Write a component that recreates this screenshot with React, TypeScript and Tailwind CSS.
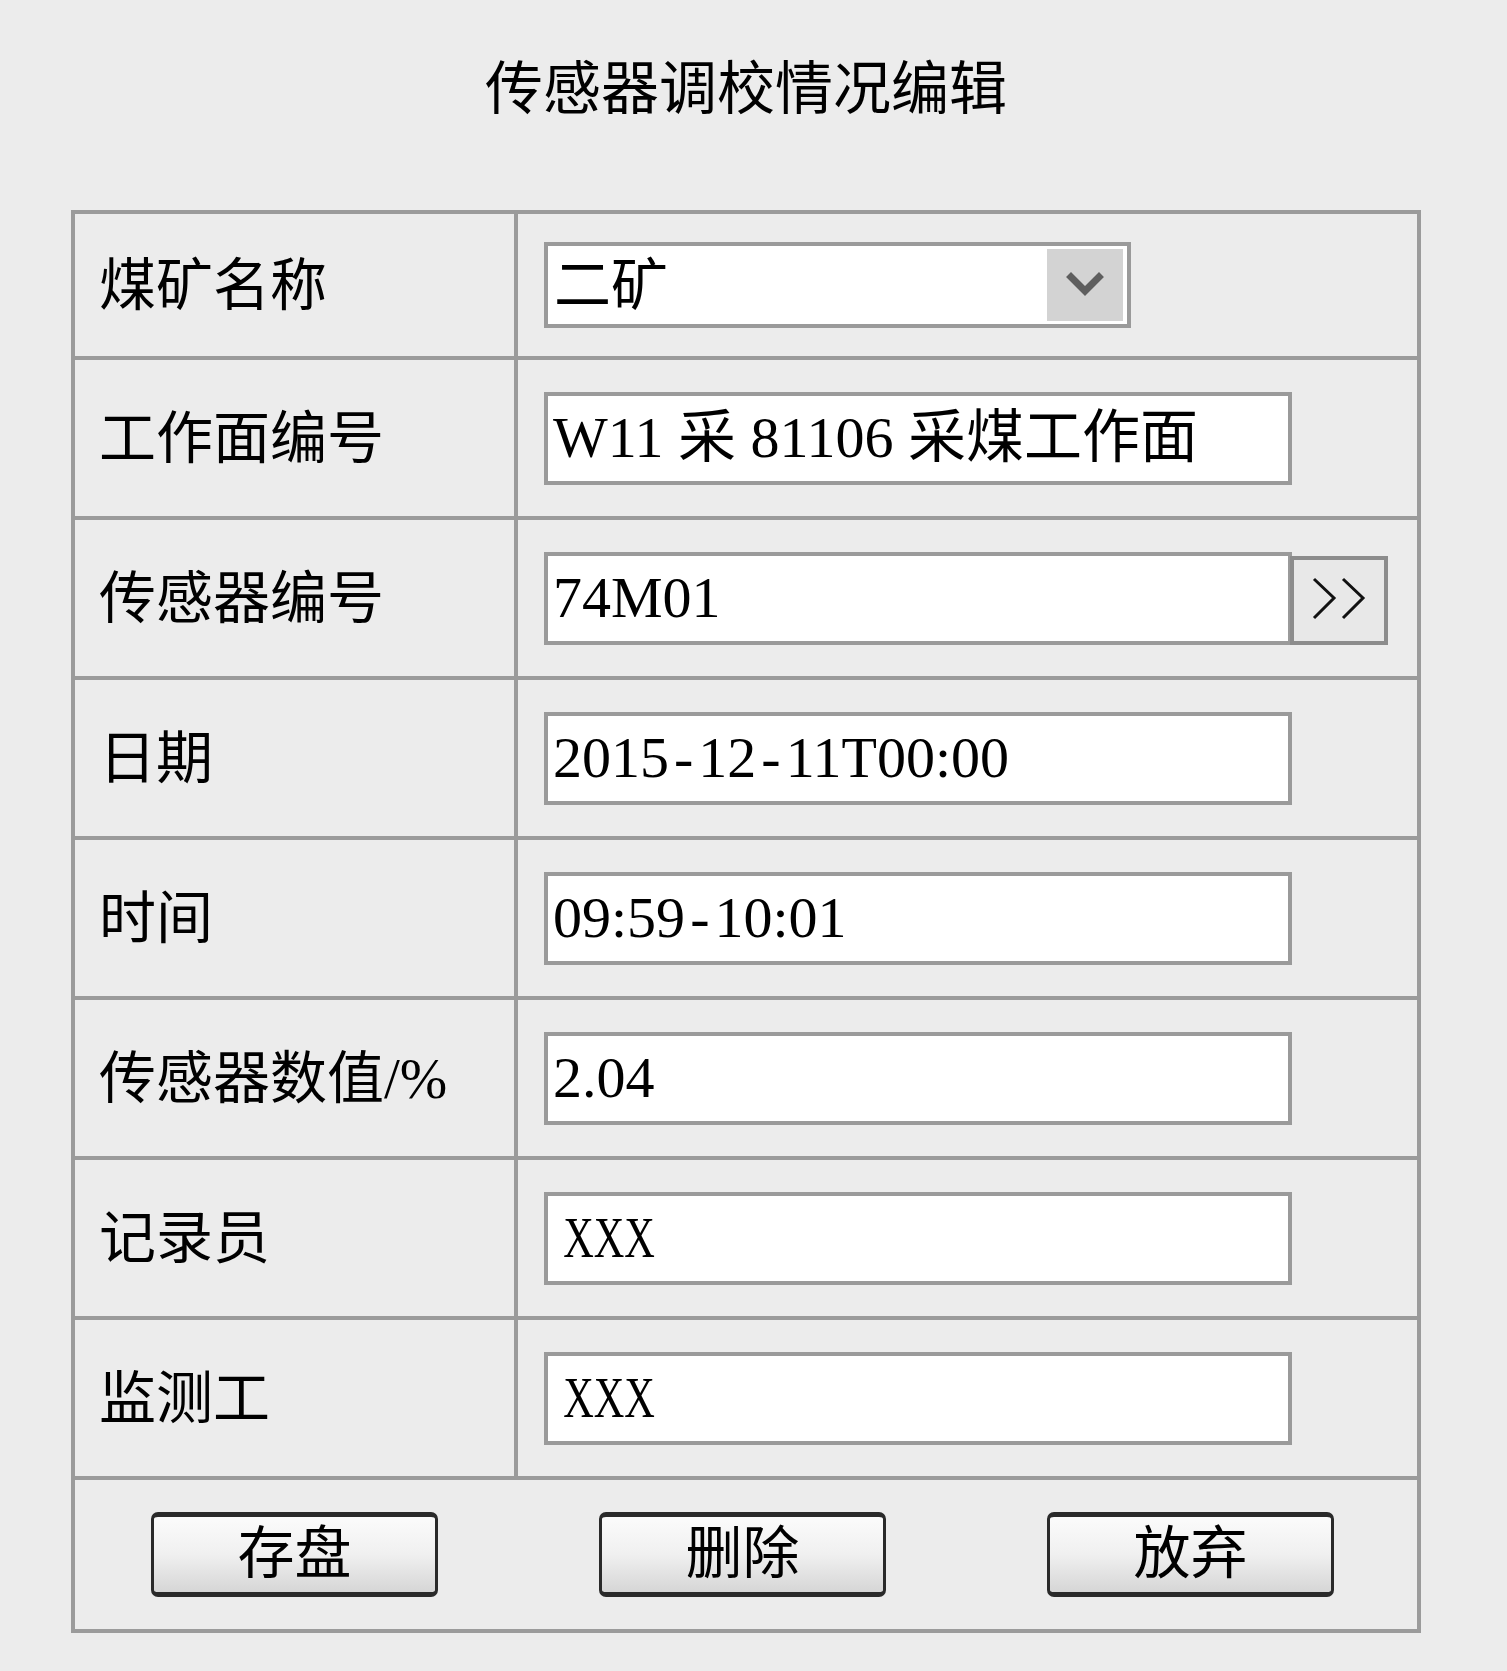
const serif = { fontFamily: '"Liberation Serif", "Noto Sans CJK SC", serif' }

const rows = [
  { label: "工作面编号", value: "W11 采 81106 采煤工作面" },
  { label: "传感器编号", value: "74M01", more: true },
  { label: "日期", value: "2015-12-11T00:00" },
  { label: "时间", value: "09:59-10:01" },
  { label: "传感器数值/%", value: "2.04" },
  { label: "记录员", value: "XXX", narrow: true },
  { label: "监测工", value: "XXX", narrow: true },
]

function Label({ text }: { text: string }) {
  return (
    <div className="flex w-[443px] shrink-0 items-center border-r-4 border-[#9b9b9b] pl-[24px] text-[57px] leading-none text-black">
      {text}
    </div>
  )
}

// hyphens in the screenshot are drawn wide, so give them a little room
function Value({ text }: { text: string }) {
  const parts = text.split("-")
  return (
    <span>
      {parts.map((p, i) => (
        <span key={i}>
          {i > 0 && <span className="mx-[5px]">-</span>}
          {p}
        </span>
      ))}
    </span>
  )
}

function Chevrons() {
  return (
    <svg width="58" height="48" viewBox="0 0 58 48" fill="none" stroke="#111" strokeWidth="3">
      <path d="M4 3 L24 22 L4 42" />
      <path d="M33 3 L53 22 L33 42" />
    </svg>
  )
}

function ActionButton({ text }: { text: string }) {
  return (
    <button className="flex h-[85px] w-[287px] items-center justify-center rounded-[7px] border-x-[3px] border-y-[5px] border-[#2a2a2a] bg-gradient-to-b from-[#fbfbfb] via-[#f0f0f0] to-[#d6d6d6] pb-[2px] text-[57px] leading-none text-black">
      {text}
    </button>
  )
}

export default function App() {
  return (
    <div className="h-[1671px] w-[1507px] bg-[#ececec] pt-[55px]" style={serif}>
      <div className="ml-[71px] w-[1350px]">
        <h1
          className="text-center text-[58px] font-normal leading-[58px] text-black"
          style={{ fontFamily: '"Noto Sans CJK SC", sans-serif' }}
        >
          传感器调校情况编辑
        </h1>

        <div className="mt-[97px] border-4 border-[#9b9b9b]">
          {/* 煤矿名称 */}
          <div className="flex h-[146px] border-b-4 border-[#9b9b9b]">
            <Label text="煤矿名称" />
            <div className="flex flex-1 items-center pl-[26px]">
              <div className="flex h-[86px] w-[587px] items-center border-4 border-[#9a9a9a] bg-white pl-[6px] pr-[4px]">
                <span className="flex-1 text-[57px] leading-none">二矿</span>
                <span className="flex h-[72px] w-[76px] items-center justify-center bg-[#d3d3d3]">
                  <svg width="40" height="30" viewBox="0 0 40 30" fill="none" stroke="#5e5e5e" strokeWidth="7" strokeLinecap="square">
                    <path d="M6 7 L20 21 L34 7" />
                  </svg>
                </span>
              </div>
            </div>
          </div>

          {rows.map((r) => (
            <div key={r.label} className="flex h-[160px] border-b-4 border-[#9b9b9b]">
              <Label text={r.label} />
              <div className="flex flex-1 items-center pl-[26px]">
                <div className="flex h-[93px] w-[748px] items-center border-4 border-[#9a9a9a] bg-white pl-[5px] text-[58px] leading-none">
                  {r.narrow ? (
                    <span className="inline-block origin-left scale-x-[0.73] pl-[14px]">{r.value}</span>
                  ) : (
                    <Value text={r.value} />
                  )}
                </div>
                {r.more && (
                  <div className="-ml-[2px] mt-[4px] flex h-[89px] w-[98px] items-center justify-center border-4 border-[#8c8c8c] bg-[#e8e8e8]">
                    <Chevrons />
                  </div>
                )}
              </div>
            </div>
          ))}

          <div className="flex h-[149px] items-center gap-[161px] pl-[76px]">
            <ActionButton text="存盘" />
            <ActionButton text="删除" />
            <ActionButton text="放弃" />
          </div>
        </div>
      </div>
    </div>
  )
}
